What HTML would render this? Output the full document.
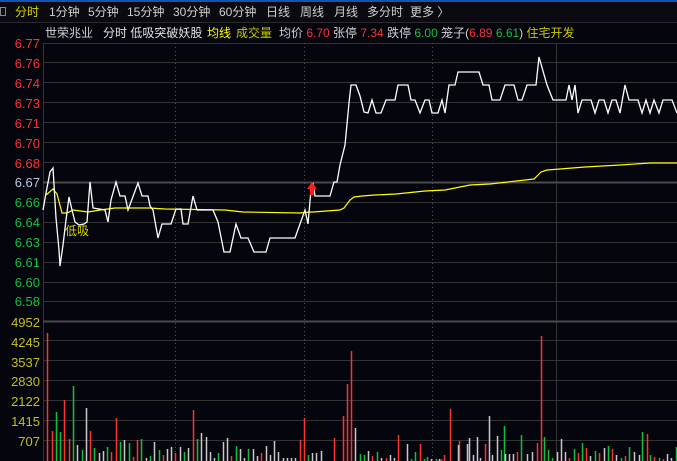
<!DOCTYPE html>
<html><head><meta charset="utf-8">
<style>
html,body{margin:0;padding:0;background:#05050d;width:677px;height:461px;overflow:hidden}
svg{display:block}
text{font-family:"Liberation Sans","Noto Sans CJK SC",sans-serif}
</style></head><body>
<svg width="677" height="461" viewBox="0 0 677 461" xmlns="http://www.w3.org/2000/svg">
<rect width="677" height="461" fill="#05050d"/>
<rect x="0" y="0" width="677" height="2" fill="#1452b4"/>
<rect x="0" y="2" width="677" height="20" fill="#0a0a10"/>
<line x1="0" y1="22.5" x2="677" y2="22.5" stroke="#2a2a2a"/>
<rect x="0.5" y="7.5" width="5" height="8" fill="none" stroke="#888"/>
<g font-size="12" fill="#d0d0d0">
<text x="15" y="16" fill="#d4d400">分时</text>
<text x="49" y="16">1分钟</text>
<text x="88" y="16">5分钟</text>
<text x="127" y="16">15分钟</text>
<text x="173" y="16">30分钟</text>
<text x="219" y="16">60分钟</text>
<text x="266" y="16">日线</text>
<text x="300" y="16">周线</text>
<text x="334" y="16">月线</text>
<text x="367" y="16">多分时</text>
<text x="410" y="16">更多 〉</text>
</g>
<g font-size="12">
<text x="45" y="37" fill="#d0d0d0">世荣兆业</text>
<text x="103" y="37" fill="#e0e0e0">分时 低吸突破妖股</text>
<text x="207" y="37" fill="#ffff00">均线</text>
<text x="236" y="37" fill="#c8c800">成交量</text>
<text x="279" y="37" fill="#d0d0d0">均价 <tspan fill="#ff3232">6.70</tspan> 张停 <tspan fill="#ff3232">7.34</tspan> 跌停 <tspan fill="#10c040">6.00</tspan> 笼子(<tspan fill="#ff3232">6.89</tspan> <tspan fill="#10c040">6.61</tspan>) <tspan fill="#c8c800">住宅开发</tspan></text>
</g>
<!-- grid -->
<g stroke="#333" stroke-width="1">
<line x1="43" y1="43.5" x2="677" y2="43.5"/>
<line x1="43" y1="62.5" x2="677" y2="62.5"/>
<line x1="43" y1="82.5" x2="677" y2="82.5"/>
<line x1="43" y1="102.5" x2="677" y2="102.5"/>
<line x1="43" y1="122.5" x2="677" y2="122.5"/>
<line x1="43" y1="142.5" x2="677" y2="142.5"/>
<line x1="43" y1="162.5" x2="677" y2="162.5"/>
<line x1="43" y1="202.5" x2="677" y2="202.5"/>
<line x1="43" y1="222.5" x2="677" y2="222.5"/>
<line x1="43" y1="242.5" x2="677" y2="242.5"/>
<line x1="43" y1="262.5" x2="677" y2="262.5"/>
<line x1="43" y1="282.5" x2="677" y2="282.5"/>
<line x1="43" y1="301.5" x2="677" y2="301.5"/>
<line x1="43" y1="340.5" x2="677" y2="340.5"/>
<line x1="43" y1="360.5" x2="677" y2="360.5"/>
<line x1="43" y1="380.5" x2="677" y2="380.5"/>
<line x1="43" y1="400.5" x2="677" y2="400.5"/>
<line x1="43" y1="420.5" x2="677" y2="420.5"/>
<line x1="43" y1="440.5" x2="677" y2="440.5"/>
<line x1="43.5" y1="43" x2="43.5" y2="461"/>
<line x1="556.5" y1="43" x2="556.5" y2="461"/>
</g>
<line x1="43" y1="182.5" x2="677" y2="182.5" stroke="#4a4a4a" stroke-width="2"/>
<line x1="43" y1="321.5" x2="677" y2="321.5" stroke="#4a4a4a" stroke-width="2"/>
<g stroke="#555" stroke-dasharray="1,3">
<line x1="175.5" y1="43" x2="175.5" y2="461"/>
<line x1="304.5" y1="43" x2="304.5" y2="461"/>
<line x1="432.5" y1="43" x2="432.5" y2="461"/>
</g>
<!-- axis labels -->
<g font-size="13" text-anchor="end">
<g fill="#ff3232">
<text x="40" y="48">6.77</text><text x="40" y="68">6.76</text><text x="40" y="88">6.74</text><text x="40" y="108">6.73</text><text x="40" y="128">6.71</text><text x="40" y="148">6.70</text><text x="40" y="168">6.68</text>
</g>
<text x="40" y="187" fill="#b8c8dc">6.67</text>
<g fill="#10c040">
<text x="40" y="207">6.66</text><text x="40" y="227">6.64</text><text x="40" y="247">6.63</text><text x="40" y="267">6.61</text><text x="40" y="287">6.60</text><text x="40" y="306">6.58</text>
</g>
<g fill="#c0c020">
<text x="40" y="327">4952</text><text x="40" y="347">4245</text><text x="40" y="367">3537</text><text x="40" y="386">2830</text><text x="40" y="406">2122</text><text x="40" y="426">1415</text><text x="40" y="446">707</text>
</g>
</g>
<!-- avg line -->
<polyline fill="none" stroke="#ffff00" stroke-width="1.2" points="46,195 53,189 57,194 62,213 67,213 73,210 88,212 100,210 115,208 150,208 165,209 225,210 243,212 300,213 310,212 313,212 340,210 344,208 350,200 354,197 362,196 375,195 396,194 425,191 445,190 470,185 490,184 534,179 541,172 547,170 560,169 585,167 620,165 650,163 677,163"/>
<!-- price line -->
<polyline fill="none" stroke="#ffffff" stroke-width="1.3" points="43,210 46,193 50,172 53,168 56,218 59,250 60,266 63,245 66,220 69,197 72,210 75,222 79,225 84,224 87,222 90,182 93,208 105,210 108,222 111,200 116,182 120,196 125,196 128,210 138,183 142,196 148,196 150,206 153,210 158,238 162,224 171,224 176,209 181,209 183,224 188,224 193,196 197,210 213,210 218,222 224,252 230,252 236,224 241,238 248,238 254,252 266,252 270,238 295,238 305,210 308,224 311,190 313,183 315,196 330,196 334,182 337,182 340,165 345,145 349,103 351,85 356,85 360,96 364,112 368,113 372,100 376,113 381,113 386,100 395,100 398,85 408,85 411,100 415,100 420,113 425,100 429,100 432,113 438,113 442,100 445,113 449,85 455,85 458,72 479,72 483,85 489,85 492,100 500,100 505,85 514,85 518,100 522,100 527,85 536,85 539,57 547,85 553,100 566,100 569,85 572,100 575,85 578,113 582,100 591,100 595,113 599,100 604,100 608,113 612,100 616,100 620,113 625,85 629,100 638,100 642,113 646,100 650,113 654,100 659,113 663,100 672,100 677,113"/>
<text x="65" y="235" font-size="12" fill="#d4d400">低吸</text>
<path d="M312,182 L307,189 L310,189 L310,195 L314,195 L314,189 L317,189 Z" fill="#ff1e1e"/>
<!-- volume bars -->
<g stroke-width="1.5">
<g stroke="#ff3232">
<path d="M47.5,333V461M52.5,431V461M64.5,400V461M69.5,439V461M90.5,431V461M111.5,452V461M116.5,418V461M133.5,457V461M137.5,440V461M163.5,455V461M175.5,453V461M193.5,410V461M231.5,456V461M261.5,453V461M300.5,440V461M304.5,418V461M334.5,438V461M343.5,416V461M347.5,384V461M351.5,351V461M372.5,456V461M386.5,458V461M398.5,435V461M420.5,444V461M441.5,459V461M444.5,455V461M450.5,409V461M459.5,441V461M485.5,444V461M517.5,452V461M537.5,443V461M541.5,336V461M569.5,458V461M578.5,453V461M586.5,448V461M599.5,453V461M612.5,449V461M625.5,456V461M647.5,434V461M654.5,457V461M663.5,459V461"/>
</g>
<g stroke="#10c040">
<path d="M56.5,412V461M60.5,432V461M73.5,386V461M82.5,450V461M94.5,448V461M107.5,447V461M120.5,442V461M129.5,443V461M141.5,439V461M150.5,456V461M159.5,450V461M184.5,452V461M197.5,439V461M218.5,453V461M236.5,446V461M248.5,449V461M308.5,455V461M360.5,454V461M364.5,455V461M377.5,452V461M411.5,459V461M415.5,452V461M424.5,459V461M427.5,457V461M436.5,459V461M501.5,450V461M504.5,426V461M521.5,435V461M544.5,437V461M548.5,450V461M552.5,458V461M574.5,449V461M582.5,443V461M595.5,451V461M608.5,446V461M621.5,458V461M629.5,447V461M642.5,432V461M650.5,455V461M659.5,458V461M676.5,447V461"/>
</g>
<g stroke="#c8c8c8">
<path d="M77.5,445V461M86.5,408V461M99.5,453V461M103.5,451V461M124.5,440V461M146.5,458V461M154.5,442V461M167.5,449V461M171.5,447V461M180.5,447V461M188.5,448V461M201.5,433V461M206.5,437V461M210.5,452V461M214.5,458V461M223.5,442V461M227.5,438V461M240.5,449V461M244.5,458V461M253.5,449V461M257.5,456V461M266.5,446V461M270.5,455V461M274.5,441V461M278.5,452V461M283.5,458V461M287.5,458V461M291.5,458V461M295.5,458V461M312.5,453V461M316.5,453V461M321.5,451V461M355.5,428V461M368.5,451V461M381.5,458V461M390.5,455V461M394.5,458V461M407.5,444V461M431.5,459V461M439.5,459V461M458.5,445V461M467.5,444V461M469.5,438V461M473.5,455V461M477.5,437V461M480.5,458V461M489.5,416V461M492.5,455V461M497.5,436V461M505.5,454V461M509.5,454V461M513.5,454V461M527.5,454V461M532.5,452V461M557.5,452V461M561.5,439V461M565.5,452V461M590.5,456V461M604.5,448V461M616.5,455V461M634.5,452V461M639.5,455V461M667.5,454V461M671.5,458V461"/>
</g>
</g>
</svg>
</body></html>
